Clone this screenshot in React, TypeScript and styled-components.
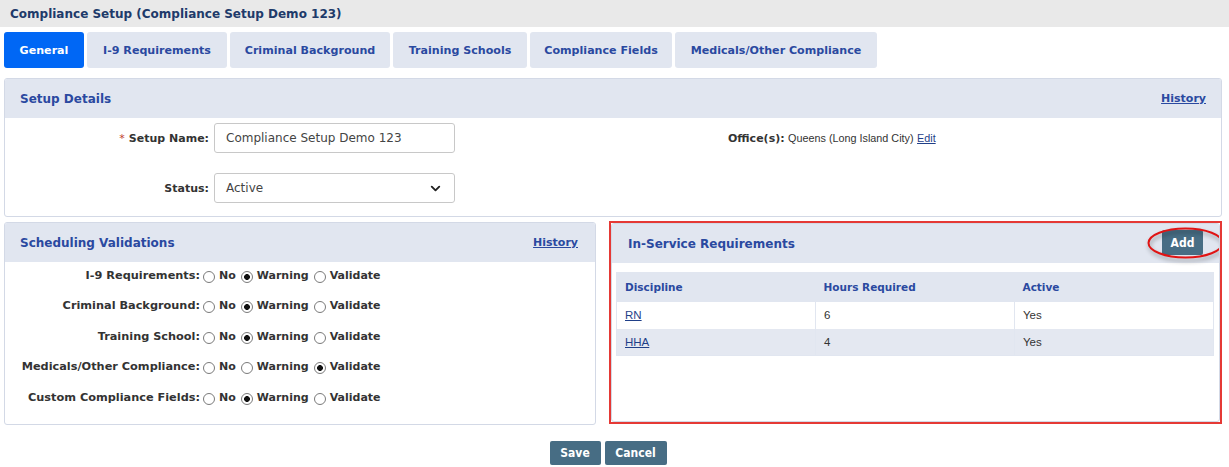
import React from "react";
import styled, { createGlobalStyle } from "styled-components";
import { ChevronDown } from "lucide-react";

const Global = createGlobalStyle`
  html, body { margin: 0; padding: 0; background: #fff; }
  body { font-family: "DejaVu Sans", Verdana, sans-serif; color: #333; }
  * { box-sizing: border-box; }
`;

const Page = styled.div`
  width: 1229px;
  height: 467px;
  overflow: hidden;
  background: #fff;
`;

const TitleBar = styled.div`
  height: 27px;
  background: #e9e9e9;
  padding-left: 10px;
  display: flex;
  align-items: center;
  font-weight: bold;
  font-size: 12px;
  color: #203a6a;
`;

const Tabs = styled.nav`
  display: flex;
  gap: 3px;
  padding: 5px 0 0 4px;
`;

const Tab = styled.div<{ $active?: boolean; $w: number }>`
  width: ${(p) => p.$w}px;
  height: 36px;
  display: flex;
  align-items: center;
  justify-content: center;
  border-radius: 3px;
  font-weight: bold;
  font-size: 11.1px;
  white-space: nowrap;
  background: ${(p) => (p.$active ? "#0067f5" : "#e1e6f0")};
  color: ${(p) => (p.$active ? "#fff" : "#2a49a0")};
`;

const Content = styled.main`
  padding: 10px 7px 0 4px;
`;

const Panel = styled.section<{ $fill?: boolean }>`
  background: #fff;
  border: 1px solid #d3d9e6;
  border-radius: 3px;
  overflow: hidden;
  height: ${(p) => (p.$fill ? "100%" : "auto")};
`;

const PanelHeader = styled.div<{ $pr?: number; $pl?: number }>`
  height: 39px;
  background: #e1e6f0;
  display: flex;
  align-items: center;
  justify-content: space-between;
  padding: 0 ${(p) => p.$pr ?? 15}px 0 ${(p) => p.$pl ?? 15}px;
`;

const PanelTitle = styled.h2`
  margin: 0;
  font-size: 12px;
  font-weight: bold;
  color: #2a49a0;
`;

const HistoryLink = styled.a`
  font-size: 11px;
  font-weight: bold;
  color: #2a49a0;
  text-decoration: underline;
  cursor: pointer;
`;

const SetupBody = styled.div`
  display: grid;
  grid-template-columns: 204px 241px 1fr;
  column-gap: 5px;
  row-gap: 20px;
  align-items: center;
  padding: 5px 0 13px 0;
`;

const FieldLabel = styled.label`
  text-align: right;
  font-size: 11px;
  font-weight: bold;
  color: #333;
`;

const Req = styled.span`
  color: #c0392b;
  font-weight: normal;
  margin-right: 4px;
`;

const TextInput = styled.div`
  height: 30px;
  border: 1px solid #c8c8c8;
  border-radius: 3px;
  padding: 0 11px;
  display: flex;
  align-items: center;
  justify-content: space-between;
  font-size: 12px;
  color: #444;
`;

const OfficeCell = styled.div`
  padding-left: 268px;
  font-size: 11px;
  color: #333;
  align-self: center;
`;

const OfficeLabel = styled.b`
  font-weight: bold;
`;

const PlainText = styled.span`
  font-family: "Liberation Sans", Arial, sans-serif;
  font-size: 10.8px;
`;

const PlainLink = styled.a<{ $size?: number }>`
  font-family: "Liberation Sans", Arial, sans-serif;
  font-size: ${(p) => p.$size ?? 11.5}px;
  color: #1f3f88;
  text-decoration: underline;
`;

const Lower = styled.div`
  display: flex;
  align-items: flex-start;
  gap: 13px;
  margin-top: 5px;
`;

const LeftCol = styled.div`
  width: 592px;
`;

const ValidationBody = styled.div`
  margin-top: -2px;
  padding: 0 0 11px 0;
`;

const ValRow = styled.div`
  display: grid;
  grid-template-columns: 195px auto;
  height: 30.5px;
  align-items: center;
`;

const ValLabel = styled.span`
  text-align: right;
  font-size: 11.3px;
  font-weight: bold;
  color: #333;
`;

const Options = styled.div`
  display: flex;
  align-items: center;
  padding-left: 3px;
`;

const Radio = styled.span<{ $on?: boolean }>`
  width: 12px;
  height: 12px;
  border-radius: 50%;
  border: 1px solid #7a7a7a;
  background: ${(p) =>
    p.$on ? "radial-gradient(circle, #111 0 2.6px, #fff 3.2px)" : "#fff"};
  margin-top: 3px;
  flex: none;
`;

const OptText = styled.span`
  font-size: 11px;
  font-weight: bold;
  color: #333;
  margin: 0 5px 0 4px;
`;

const RedBox = styled.div`
  width: 613px;
  height: 203px;
  margin-top: -1px;
  border: 2px solid #e53935;
`;

const AddWrap = styled.div`
  position: relative;
  display: flex;
  margin-top: -2px;
`;

const ActionButton = styled.button<{ $w?: number }>`
  height: ${(p) => (p.$w ? 24 : 25)}px;
  min-width: ${(p) => p.$w ?? 41}px;
  padding: 0 6px;
  border: none;
  border-radius: 2px;
  background: #476d84;
  color: #fff;
  font-family: "DejaVu Sans Condensed", "DejaVu Sans", sans-serif;
  font-weight: bold;
  font-size: 12px;
  cursor: pointer;
`;

const Ellipse = styled.svg`
  position: absolute;
  left: -15px;
  top: -3px;
  width: 77px;
  height: 32px;
  overflow: visible;
  pointer-events: none;
  filter: drop-shadow(1px 3px 2px rgba(0, 0, 0, 0.35));
`;

const TableWrap = styled.div`
  padding: 9px 5px 0 4px;
`;

const Table = styled.table`
  width: 100%;
  border-collapse: collapse;
  table-layout: fixed;
  border: 1px solid #e1e6f0;
`;

const Th = styled.th`
  height: 29px;
  background: #e1e6f0;
  text-align: left;
  padding: 0 8px;
  font-size: 10.5px;
  font-weight: bold;
  color: #2a49a0;
`;

const Tr = styled.tr<{ $alt?: boolean }>`
  background: ${(p) => (p.$alt ? "#e4e8f1" : "#fff")};
`;

const Td = styled.td`
  height: 27px;
  padding: 0 8px;
  border-right: 1px solid #e1e6f0;
  font-family: "Liberation Sans", Arial, sans-serif;
  font-size: 11.5px;
  color: #333;
`;

const Footer = styled.div`
  display: flex;
  justify-content: center;
  gap: 4px;
  margin-top: 16px;
  padding-right: 10px;
`;

const tabs = [
  { t: "General", w: 80 },
  { t: "I-9 Requirements", w: 140 },
  { t: "Criminal Background", w: 160 },
  { t: "Training Schools", w: 134 },
  { t: "Compliance Fields", w: 142 },
  { t: "Medicals/Other Compliance", w: 202 },
];

const validations: { label: string; value: "No" | "Warning" | "Validate" }[] = [
  { label: "I-9 Requirements:", value: "Warning" },
  { label: "Criminal Background:", value: "Warning" },
  { label: "Training School:", value: "Warning" },
  { label: "Medicals/Other Compliance:", value: "Validate" },
  { label: "Custom Compliance Fields:", value: "Warning" },
];

const rows = [
  { d: "RN", h: "6", a: "Yes" },
  { d: "HHA", h: "4", a: "Yes" },
];

export default function App() {
  return (
    <Page>
      <Global />
      <TitleBar>Compliance Setup (Compliance Setup Demo 123)</TitleBar>
      <Tabs>
        {tabs.map((t, i) => (
          <Tab key={t.t} $w={t.w} $active={i === 0}>
            {t.t}
          </Tab>
        ))}
      </Tabs>
      <Content>
        <Panel>
          <PanelHeader>
            <PanelTitle>Setup Details</PanelTitle>
            <HistoryLink>History</HistoryLink>
          </PanelHeader>
          <SetupBody>
            <FieldLabel>
              <Req>*</Req>Setup Name:
            </FieldLabel>
            <TextInput>Compliance Setup Demo 123</TextInput>
            <OfficeCell>
              <OfficeLabel>Office(s):</OfficeLabel> <PlainText>Queens (Long Island City)</PlainText>{" "}
              <PlainLink $size={10.8}>Edit</PlainLink>
            </OfficeCell>
            <FieldLabel>Status:</FieldLabel>
            <TextInput>
              Active
              <ChevronDown size={15} strokeWidth={3} color="#222" />
            </TextInput>
          </SetupBody>
        </Panel>
        <Lower>
          <LeftCol>
            <Panel>
              <PanelHeader $pr={17}>
                <PanelTitle>Scheduling Validations</PanelTitle>
                <HistoryLink>History</HistoryLink>
              </PanelHeader>
              <ValidationBody>
                {validations.map((v) => (
                  <ValRow key={v.label}>
                    <ValLabel>{v.label}</ValLabel>
                    <Options>
                      {(["No", "Warning", "Validate"] as const).map((o) => (
                        <React.Fragment key={o}>
                          <Radio $on={v.value === o} />
                          <OptText>{o}</OptText>
                        </React.Fragment>
                      ))}
                    </Options>
                  </ValRow>
                ))}
              </ValidationBody>
            </Panel>
          </LeftCol>
          <RedBox>
            <Panel $fill>
              <PanelHeader $pl={16} $pr={16}>
                <PanelTitle>In-Service Requirements</PanelTitle>
                <AddWrap>
                  <ActionButton>Add</ActionButton>
                  <Ellipse viewBox="0 0 77 32">
                    <ellipse cx="38.5" cy="16" rx="37" ry="14.5" fill="none" stroke="#e01414" strokeWidth="2" />
                  </Ellipse>
                </AddWrap>
              </PanelHeader>
              <TableWrap>
                <Table>
                  <thead>
                    <tr>
                      <Th>Discipline</Th>
                      <Th>Hours Required</Th>
                      <Th>Active</Th>
                    </tr>
                  </thead>
                  <tbody>
                    {rows.map((r, i) => (
                      <Tr key={r.d} $alt={i % 2 === 1}>
                        <Td>
                          <PlainLink>{r.d}</PlainLink>
                        </Td>
                        <Td>{r.h}</Td>
                        <Td>{r.a}</Td>
                      </Tr>
                    ))}
                  </tbody>
                </Table>
              </TableWrap>
            </Panel>
          </RedBox>
        </Lower>
        <Footer>
          <ActionButton $w={51}>Save</ActionButton>
          <ActionButton $w={62}>Cancel</ActionButton>
        </Footer>
      </Content>
    </Page>
  );
}
